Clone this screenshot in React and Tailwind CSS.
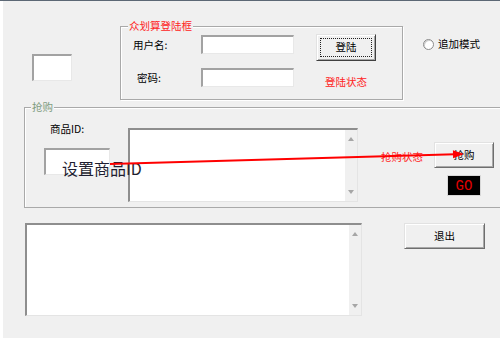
import React from "react";

const sunken =
  "bg-white border-t-2 border-l-2 border-b border-r border-t-[#8e8e8e] border-l-[#8e8e8e] border-b-[#e4e4e4] border-r-[#e4e4e4]";
const inputCls =
  "bg-white border-t-2 border-l-2 border-b border-r border-t-[#a2a2a2] border-l-[#a2a2a2] border-b-[#e8e8e8] border-r-[#e8e8e8]";
const btnCls =
  "relative flex items-center justify-center bg-[#f0f0f0] border border-t-[#e2e2e2] border-l-[#e2e2e2] border-b-[#6e6e6e] border-r-[#6e6e6e] shadow-[inset_1px_1px_0_#ffffff,inset_-1px_-1px_0_#a8a8a8] leading-none";

function Scroll() {
  return (
    <div className="w-[12px] h-full bg-[#f0f0f0] flex flex-col items-center justify-between py-[7px]">
      <svg width="6" height="4" viewBox="0 0 6 4">
        <path d="M0 4 L3 0 L6 4Z" fill="#a6a6a6" />
      </svg>
      <svg width="6" height="4" viewBox="0 0 6 4">
        <path d="M0 0 L3 4 L6 0Z" fill="#a6a6a6" />
      </svg>
    </div>
  );
}

export default function App() {
  return (
    <div className="relative w-[500px] h-[338px] overflow-hidden bg-[#f0f0f0] border-t border-t-[#5c6875] shadow-[inset_3px_0_0_#ffffff,inset_2px_0_0_#e6e6e6] font-['Noto_Sans_CJK_SC',sans-serif] text-[10.5px] text-black">
      {/* Row 1 */}
      <div className="flex items-start mt-[25px]">
        <div className={`${inputCls} ml-[32px] mt-[28px] w-[40px] h-[27px]`} />

        <div className="relative ml-[48px] w-[283px] h-[74px] border border-[#a9a9a9] shadow-[inset_1px_1px_0_#ffffff,1px_1px_0_#ffffff]">
          <span className="absolute left-[7px] -top-[7px] px-[1px] bg-[#f0f0f0] text-[#ff2323] leading-[12px]">
            众划算登陆框
          </span>
          <div className="flex items-start mt-[7px]">
            <span className="ml-[12px] w-[68px] mt-[1px] leading-[19px]">用户名:</span>
            <div className={`${inputCls} mt-[1px] w-[93px] h-[19px]`} />
            <div className={`${btnCls} ml-[22px] w-[60px] h-[27px] border-b-[#404040] border-r-[#404040]`}>
              <span className="absolute inset-[3px] border border-dotted border-[#222222]" />
              <span>登陆</span>
            </div>
          </div>
          <div className="flex items-start mt-[7px]">
            <span className="ml-[16px] w-[64px] leading-[19px]">密码:</span>
            <div className={`${inputCls} w-[93px] h-[19px]`} />
            <span className="ml-[31px] mt-[4px] leading-[19px] text-[#ff2323]">登陆状态</span>
          </div>
        </div>

        <div className="flex items-center ml-[20px] mt-[12px] gap-[4px]">
          <span className="w-[11px] h-[11px] rounded-full bg-white border border-[#8c8c8c] shadow-[inset_1px_1px_0_#d0d0d0]" />
          <span className="leading-[12px]">追加模式</span>
        </div>
      </div>

      {/* Row 2 */}
      <div className="relative mt-[7px] ml-[24px] w-[490px] h-[101px] border border-[#a9a9a9] shadow-[inset_1px_1px_0_#ffffff]">
        <span className="absolute left-[6px] -top-[7px] px-[1px] bg-[#f0f0f0] text-[#7f9d7f] leading-[12px]">
          抢购
        </span>
        <div className="flex items-start">
          <div className="ml-[19px] w-[66px] flex flex-col">
            <span className="ml-[6px] mt-[14px] leading-[14px]">商品ID:</span>
            <div className={`${inputCls} mt-[12px] w-[66px] h-[27px]`} />
          </div>
          <div className={`${sunken} ml-[18px] mt-[20px] w-[230px] h-[74px] flex`}>
            <div className="flex-1" />
            <Scroll />
          </div>
          <span className="ml-[23px] mt-[42px] w-[53px] leading-[14px] text-[#ff2323]">抢购状态</span>
          <div className="mt-[34px] w-[60px] flex flex-col items-center">
            <div className={`${btnCls} w-[60px] h-[26px]`}>抢购</div>
            <div className="mt-[7px] w-[34px] h-[21px] bg-black border border-[#d8d8d8] flex items-center justify-center font-['Liberation_Mono',monospace] text-[14px] leading-none text-[#e00000]">
              GO
            </div>
          </div>
        </div>
      </div>

      {/* Row 3 */}
      <div className="flex items-start mt-[15px] ml-[25px]">
        <div className={`${sunken} w-[337px] h-[93px] flex`}>
          <div className="flex-1" />
          <Scroll />
        </div>
        <div className={`${btnCls} ml-[42px] w-[81px] h-[26px]`}>退出</div>
      </div>

      {/* Overlays: annotation text and arrow */}
      <span className="absolute left-[62px] top-[157px] text-[16px] leading-[20px] text-[#1e1e30]">
        设置商品ID
      </span>
      <svg
        className="absolute left-0 top-0 pointer-events-none"
        width="500"
        height="338"
        viewBox="0 0 500 338"
      >
        <line x1="110" y1="163" x2="455" y2="153.3" stroke="#ff0000" strokeWidth="2" />
        <polygon points="464,153 453.1,157.3 452.9,149.3" fill="#ff0000" />
      </svg>
    </div>
  );
}
